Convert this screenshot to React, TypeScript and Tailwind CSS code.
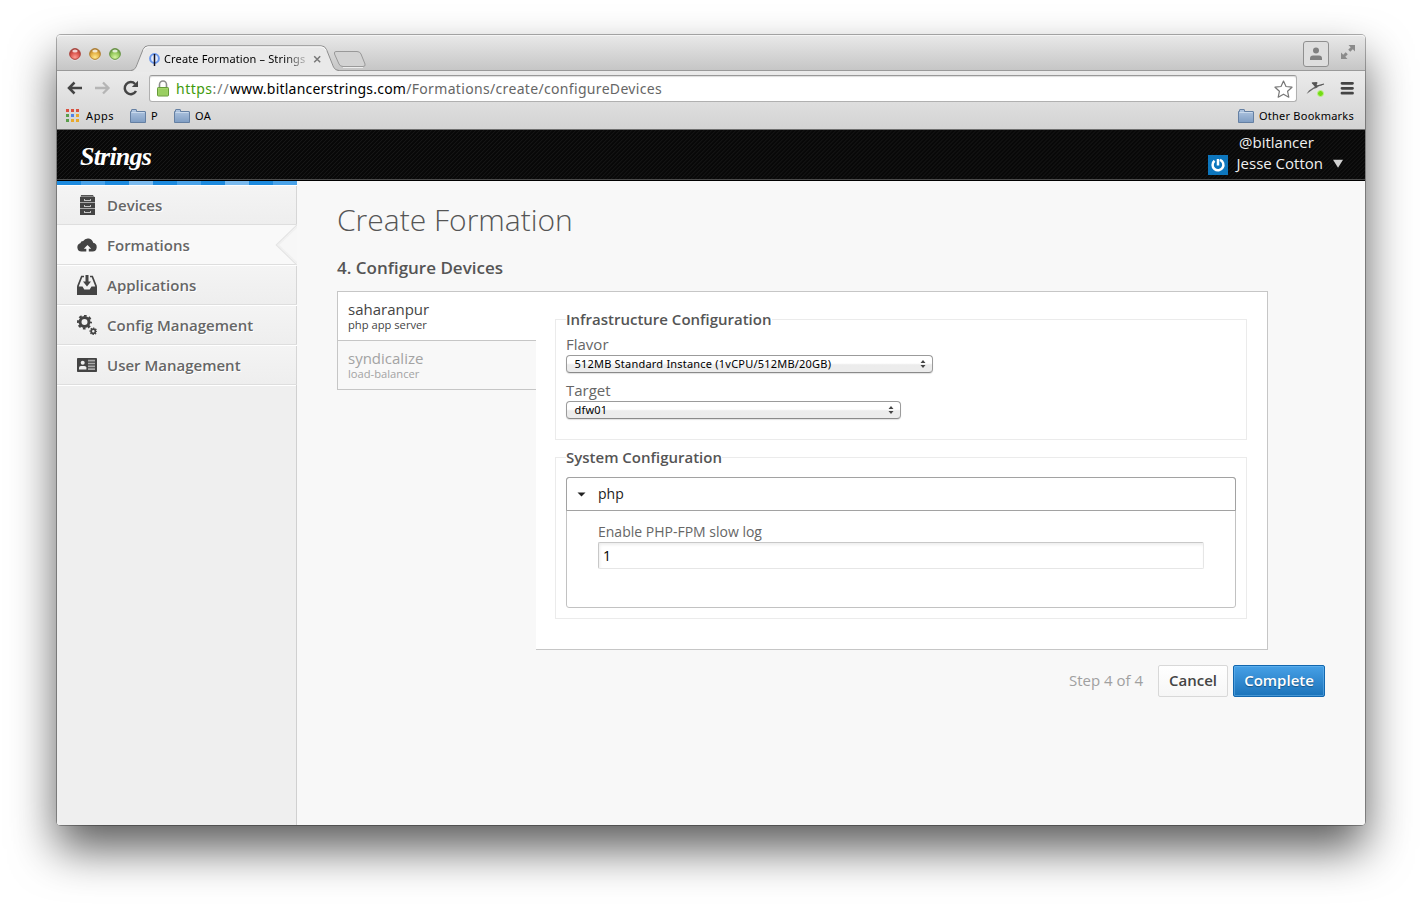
import type { ReactNode } from "react";

const stripe = [
  "bg-[#1c8ade]", "bg-[#49a2e8]", "bg-[#1c8ade]", "bg-[#7abaee]", "bg-[#1c8ade]",
  "bg-[#49a2e8]", "bg-[#1c8ade]", "bg-[#7abaee]", "bg-[#1c8ade]", "bg-[#49a2e8]",
];

function Folder() {
  return (
    <svg width="16" height="14" viewBox="0 0 16 14">
      <defs>
        <linearGradient id="folder" x1="0" y1="0" x2="0" y2="1">
          <stop offset="0" stopColor="#b3c8e2" />
          <stop offset="1" stopColor="#7f9dc3" />
        </linearGradient>
      </defs>
      <path d="M.5 13.5v-11h1v-1.5q0-.5.5-.5h4q.5 0 .5.5v1.5h8.500q.5 0 .5.5v10.500z" fill="url(#folder)" stroke="#6580a3" />
      <path d="M1.500 3.500h13" stroke="#c9d9ec" />
    </svg>
  );
}

function Light({ id, dark, mid, light }: { id: string; dark: string; mid: string; light: string }) {
  return (
    <svg width="12" height="13" viewBox="0 0 12 13">
      <defs>
        <radialGradient id={id} cx=".5" cy=".8" r=".75">
          <stop offset="0" stopColor={light} />
          <stop offset=".6" stopColor={mid} />
          <stop offset="1" stopColor={dark} />
        </radialGradient>
      </defs>
      <circle cx="6" cy="6.800" r="5.800" fill="#fff" opacity=".6" />
      <circle cx="6" cy="6" r="5.400" fill={`url(#${id})`} stroke={dark} strokeWidth=".9" />
      <ellipse cx="6" cy="3" rx="2.700" ry="1.500" fill="#fff" opacity=".75" />
    </svg>
  );
}

function DrawerIcon() {
  return (
    <svg width="20" height="20" viewBox="0 0 20 20">
      <path d="M4 0h12l1.500 2h-14z" fill="#888" />
      <path d="M4 0h12v1H4z" fill="#555" />
      <path d="M3 2h15v5H3zM3 8h15v5H3zM3 14h15v6H3z" fill="#444" />
      <path d="M3 7.500h15M3 13.500h15" stroke="#aaa" />
      <path d="M7 4h1v1h5V4h1v2H7zM7 10h1v1h5v-1h1v2H7zM7 16h1v1h5v-1h1v2H7z" fill="#c4c4c4" />
    </svg>
  );
}

function CloudIcon() {
  return (
    <svg width="20" height="20" viewBox="0 0 20 20">
      <path d="M4.500 16.500A4.200 4.200 0 0 1 3.300 8.300 3 3 0 0 1 6.200 6 5.500 5.500 0 0 1 16.200 7.800 4.400 4.400 0 0 1 15.500 16.500z" fill="#444" />
      <path d="M10.500 10l3.700 3.800h-2.400V17H9.300v-3.200H6.800z" fill="#f9f9f9" />
    </svg>
  );
}

function TrayIcon() {
  return (
    <svg width="20" height="20" viewBox="0 0 20 20">
      <path d="M7 1.500H4.700L1 11v1.500M13 1.500h2.300L19 11v1.500" fill="none" stroke="#444" strokeWidth="1.700" />
      <path d="M0 11.500h5.500l1.800 3h5.400l1.800-3H20V20H0z" fill="#444" />
      <path d="M8.500 0h3v6.500H14L10 11.500 6 6.500h2.500z" fill="#444" />
    </svg>
  );
}

function GearsIcon() {
  return (
    <svg width="20" height="20" viewBox="0 0 20 20" fill="none" stroke="#444">
      <circle cx="7.500" cy="7" r="4.500" strokeWidth="3" />
      <circle cx="7.500" cy="7" r="6.500" strokeWidth="2" strokeDasharray="2.700 2.405" strokeDashoffset="1.350" />
      <circle cx="16.300" cy="16.300" r="2.100" strokeWidth="1.700" />
      <circle cx="16.300" cy="16.300" r="3.200" strokeWidth="1.300" strokeDasharray="1.400 1.113" strokeDashoffset=".7" />
    </svg>
  );
}

function CardIcon() {
  return (
    <svg width="20" height="20" viewBox="0 0 20 20">
      <rect y="3" width="20" height="14" rx=".8" fill="#444" />
      <circle cx="5.700" cy="7.700" r="2" fill="#eee" />
      <path d="M2 14.500v-2q0-1.500 2-1.500h3.400q2 0 2 1.500v2z" fill="#eee" />
      <path d="M11 5.700h7M11 8.500h7M11 11.300h7M11 14.100h7" stroke="#aaa" strokeWidth="1.700" />
    </svg>
  );
}

function NavItem({ icon, label, active }: { icon: ReactNode; label: string; active?: boolean }) {
  return (
    <li
      className={
        active
          ? "relative flex h-10 items-center gap-2.5 border-b border-[#dedede] bg-[#f9f9f9] pt-px pl-5"
          : "flex h-10 items-center gap-2.5 border-t border-b border-t-white border-b-[#dedede] bg-linear-to-b from-[#f4f4f4] to-[#eeeeee] pl-5 shadow-[inset_-1px_0_0_#d6d6d6]"
      }
    >
      {icon}
      <span className="text-[15px] font-semibold text-[#666] [text-shadow:1px_1px_0_#fff]">{label}</span>
      {active && (
        <svg className="absolute -top-px right-0" width="24" height="42" viewBox="0 0 24 42">
          <path d="M24 .5L3 21 24 41.500z" fill="#f7f7f7" />
          <path d="M24 1L3.300 21 24 41" fill="none" stroke="#e4e4e4" strokeWidth="1.200" />
          <path d="M24 3L5.300 21 24 39" fill="none" stroke="#f0f0f0" strokeWidth="1.500" />
        </svg>
      )}
    </li>
  );
}

function Select({ value, wide }: { value: string; wide?: boolean }) {
  return (
    <button
      className={
        (wide ? "w-[367px]" : "w-[335px]") +
        " mt-px flex h-[18px] items-center justify-between rounded-[4px] border border-[#9b9b9b] border-b-[#8a8a8a] bg-linear-to-b from-white from-45% to-[#ececec] to-55% pr-1.5 pl-[7.5px] font-['Noto_Sans',sans-serif] text-[11px] leading-4 tracking-[0.21px] text-black shadow-[0_1px_1px_rgba(0,0,0,0.12)]"
      }
    >
      <span>{value}</span>
      <svg width="6" height="8" viewBox="0 0 6 8">
        <path d="M3 0l2.500 3h-5zM3 8l2.500-3h-5z" fill="#444" />
      </svg>
    </button>
  );
}

function TitleBar() {
  return (
    <div className="flex h-9 items-start rounded-t-[4px] border-b border-[#9a9a9a] bg-linear-to-b from-[#e9e9e9] to-[#c6c6c6] shadow-[inset_0_1px_0_#f5f5f5]">
      <div className="flex gap-2 pt-[13px] pl-3">
        <Light id="red" dark="#a43c35" mid="#d9534b" light="#ff9c92" />
        <Light id="amber" dark="#a9782a" mid="#e3ae42" light="#ffe88c" />
        <Light id="green" dark="#5f8c3c" mid="#93c75a" light="#d6f5a0" />
      </div>
      <div className="relative ml-2.5 h-9 w-[209px] pt-[10px]">
        <svg className="absolute top-[10px] left-0" width="209" height="27" viewBox="0 0 209 27">
          <path d="M0 27V26q3-.5 4.500-4L12 4.500Q13.500 1 17 1H190q4 0 5.500 3.500L203 22q1.500 3.500 5 4v1z" fill="#e9e9e9" />
          <path d="M0 25.500q3.500 0 5-3.500L12 4.500Q13.500.8 17 .8H190q4 0 5.500 3.700L202.500 22q1.500 3.500 5.500 3.500" fill="none" stroke="#8e8e8e" />
          <path d="M12.500 5.500Q14 2 17 1.900H190q3.500 0 5 3.600" fill="none" stroke="#f9f9f9" />
        </svg>
        <div className="relative flex h-7 items-center pl-[18px]">
          <svg className="shrink-0" width="12" height="14" viewBox="0 0 12 14">
            <circle cx="5.500" cy="6.500" r="4.400" fill="#e4ecfc" stroke="#6a98ee" strokeWidth="2" />
            <path d="M5.500 2v12" stroke="#112" strokeWidth="1.500" />
          </svg>
          <span className="w-[146px] shrink-0 overflow-hidden pl-[3px] font-['Noto_Sans',sans-serif] text-[11px] tracking-[0.14px] whitespace-nowrap text-black [mask-image:linear-gradient(to_right,#000_84%,rgba(0,0,0,0.25)_98%)]">
            Create Formation – Strings
          </span>
          <svg className="ml-1.5 shrink-0" width="9" height="9" viewBox="0 0 9 9">
            <path d="M1.200 1.200l6 6M7.200 1.200l-6 6" stroke="#777" strokeWidth="1.500" />
          </svg>
        </div>
      </div>
      <svg className="mt-[15px] -ml-[7px]" width="33" height="19" viewBox="0 0 33 19">
        <path d="M3 1.500H24q3 0 4 2.500l4 10q.8 2.500-2 2.500H10q-3 0-4-2.500L1.500 4Q.8 1.500 3 1.500z" fill="#d3d3d3" stroke="#999" />
        <path d="M10 17.500h20" stroke="#eee" />
      </svg>
      <div className="mt-1.5 ml-auto flex h-[26px] w-[26px] items-end justify-center rounded-[3px] border border-[#8f8f8f] bg-[#dedede] pb-1.5">
        <svg width="14" height="13" viewBox="0 0 14 13">
          <circle cx="7" cy="3.500" r="3" fill="#808080" />
          <path d="M1 13v-1.500q0-3 3-3h6q3 0 3 3V13z" fill="#808080" />
        </svg>
      </div>
      <svg className="mt-[9px] mr-[9px] ml-[11px]" width="16" height="16" viewBox="0 0 16 16">
        <path d="M8.500 1H15v6.500l-2.200-2.200-2.500 2.500-2.100-2.100 2.500-2.500zM1 8.500v6.500h6.500l-2.200-2.200 2.500-2.500-2.100-2.100-2.500 2.500z" fill="#8b8b8b" />
      </svg>
    </div>
  );
}

function Toolbar() {
  return (
    <div className="h-[59px] border-b border-[#6f6f6f] bg-linear-to-b from-[#ebebeb] to-[#d3d3d3] font-['Noto_Sans',sans-serif]">
      <div className="flex h-8 items-start pt-1">
        <div className="flex pt-[5px] pl-2.5">
          <svg width="16" height="16" viewBox="0 0 16 16" fill="none" stroke="#444" strokeWidth="2.500">
            <path d="M15 8H2M7.500 2.500L2 8l5.500 5.500" />
          </svg>
          <svg className="ml-3" width="16" height="16" viewBox="0 0 16 16" fill="none" stroke="#b5b5b5" strokeWidth="2.300">
            <path d="M0 8H13.500M8 2.500L13.500 8 8 13.500" />
          </svg>
          <svg className="ml-[11px]" width="18" height="16" viewBox="0 0 17 16">
            <path d="M13.500 11A6 6 0 1 1 12.600 4" fill="none" stroke="#444" strokeWidth="2.500" />
            <path d="M15.500.8V7H9.300z" fill="#444" />
          </svg>
        </div>
        <div className="ml-[9px] flex h-[27px] w-[1148px] items-center rounded-[3px] border border-[#b0b0b0] border-t-[#999] bg-white pr-[3px] pl-[7px] shadow-[inset_0_1px_1px_#ddd]">
          <svg width="12" height="17" viewBox="0 0 12 17">
            <path d="M2.500 8V4.500a3.500 3.500 0 0 1 7 0V8" fill="none" stroke="#8d8d8d" strokeWidth="1.600" />
            <rect x=".5" y="7.500" width="11" height="8.500" rx=".8" fill="#a5d66c" stroke="#669b3a" />
            <path d="M1.500 10h9M1.500 12h9M1.500 14h9" stroke="#8cc553" strokeWidth=".8" />
          </svg>
          <span className="ml-[7px] text-[14px] leading-6 whitespace-nowrap text-[#777]">
            <span className="tracking-[0.5px] text-[#3f9a0c]">https</span>
            <span className="tracking-[1px]">://</span>
            <span className="tracking-[0.22px] text-black">www.bitlancerstrings.com</span>
            <span className="tracking-[0.33px] text-[#666]">/Formations/create/configureDevices</span>
          </span>
          <svg className="ml-auto" width="19" height="18" viewBox="0 0 19 18">
            <path d="M9.500 1l2.500 5.500 6 .7-4.400 4.100 1.200 5.900-5.300-3-5.300 3 1.200-5.900L1 7.200l6-.7z" fill="#fff" stroke="#777" strokeWidth="1.200" strokeLinejoin="round" />
          </svg>
        </div>
        <svg className="mt-1 ml-2" width="22" height="20" viewBox="0 0 22 20">
          <path d="M1.500 15L4 11.500 10 7.500 13 8.500 8.500 10z" fill="#666" />
          <path d="M6.500 3.700l5.500-.7-1 4 8-1.500-8.500 3z" fill="#555" />
          <path d="M7 4h5.500M11.500 3.500L10.500 8M10 7.500l9-2.500" stroke="#555" strokeWidth="1.200" fill="none" />
          <circle cx="15.500" cy="14.500" r="3" fill="#74dc14" stroke="#c0f090" />
        </svg>
        <svg className="mt-[5px] ml-[13px]" width="14" height="16" viewBox="0 0 14 16">
          <path d="M2 3.300h10.500M2 8.300h10.500M2 13.200h10.500" stroke="#444" strokeWidth="2.800" strokeLinecap="round" />
        </svg>
      </div>
      <div className="flex h-[26px] items-center pr-[11px] pl-2 text-[11px] text-black">
        <svg width="16" height="16" viewBox="0 0 16 16">
          <path d="M1 1h3v3H1zM6 1h3v3H6zM11 1h3v3h-3z" fill="#d9503f" />
          <path d="M1 6h3v3H1zM1 11h3v3H1z" fill="#5a9e4b" />
          <path d="M6 6h3v3H6z" fill="#5082e8" />
          <path d="M11 6h3v3h-3zM6 11h3v3H6zM11 11h3v3h-3z" fill="#e8a92c" />
        </svg>
        <span className="ml-[5px] w-11 tracking-[0.6px]">Apps</span>
        <Folder />
        <span className="ml-[5px] w-[23px]">P</span>
        <Folder />
        <span className="ml-[5px] tracking-[0.3px]">OA</span>
        <span className="ml-auto flex items-center gap-[5px]">
          <Folder />
          <span className="tracking-[0.24px]">Other Bookmarks</span>
        </span>
      </div>
    </div>
  );
}

function SiteHeader() {
  return (
    <header className="flex h-[51px] items-start justify-between border-b border-black bg-[#0b0b0b] bg-[repeating-linear-gradient(135deg,#080808_0px,#080808_1.4px,#181818_2.1px,#080808_2.83px)] shadow-[inset_0_-1px_0_#4a4a4a]">
      <div className="pt-[9px] pl-[23px] font-['Liberation_Serif',serif] text-[26px] leading-9 font-bold tracking-[-0.8px] text-white italic">
        Strings
      </div>
      <div className="grid grid-cols-[20px_auto] gap-x-2 pt-[2px] pr-[22px] text-[15px] leading-[21px] text-[#f0f0f0]">
        <span className="col-start-2 pl-[3.500px]">@bitlancer</span>
        <svg className="mt-[2px]" width="20" height="20" viewBox="0 0 20 20">
          <path d="M0 0h20v20H0z" fill="#0d76bd" />
          <path d="M6.500 5.800A5.400 5.400 0 1 0 12 4.900M10 4v6.500" fill="none" stroke="#fff" strokeWidth="2.500" />
        </svg>
        <span className="flex items-center gap-2.5 pb-0.5 pl-px">
          Jesse Cotton
          <svg width="10" height="9" viewBox="0 0 10 9">
            <path d="M0 .8h10L5 8.800z" fill="#d0d0d0" />
          </svg>
        </span>
      </div>
    </header>
  );
}

function Sidebar() {
  return (
    <aside className="w-60 shrink-0 bg-[#efefef] shadow-[inset_-1px_0_0_#d0d0d0]">
      <div className="flex h-1">
        {stripe.map((c, i) => (
          <span key={i} className={`w-6 ${c}`} />
        ))}
      </div>
      <ul>
        <NavItem icon={<DrawerIcon />} label="Devices" />
        <NavItem icon={<CloudIcon />} label="Formations" active />
        <NavItem icon={<TrayIcon />} label="Applications" />
        <NavItem icon={<GearsIcon />} label="Config Management" />
        <NavItem icon={<CardIcon />} label="User Management" />
      </ul>
      <div className="mr-px h-px bg-white" />
    </aside>
  );
}

function Devices() {
  return (
    <div className="mt-[13px] flex w-[931px] items-start">
      <div className="w-[199px] border-t border-l border-[#c6c6c6]">
        <div className="border-b border-[#c6c6c6] bg-white pt-[7px] pb-[9px] pl-2.5 text-[#444]">
          <div className="text-[15px] leading-5">saharanpur</div>
          <div className="text-[11.2px] leading-3">php app server</div>
        </div>
        <div className="border-b border-[#c6c6c6] pt-[7px] pb-[9px] pl-2.5 text-[#a3a3a3]">
          <div className="text-[15px] leading-5">syndicalize</div>
          <div className="text-[11.2px] leading-3">load-balancer</div>
        </div>
      </div>
      <div className="h-[359px] w-[732px] border-t border-r border-b border-[#c6c6c6] bg-white pt-[17px] pr-5 pl-[19px] text-[15px] leading-5 text-[#666]">
        <fieldset className="h-[131px] border border-[#ebebeb] px-2.5">
          <legend className="font-semibold text-[#555]">Infrastructure Configuration</legend>
          <div className="pt-[5px]">Flavor</div>
          <Select wide value="512MB Standard Instance (1vCPU/512MB/20GB)" />
          <div className="pt-[7px]">Target</div>
          <Select value="dfw01" />
        </fieldset>
        <fieldset className="mt-[7px] h-[172px] border border-[#ebebeb] px-2.5">
          <legend className="font-semibold text-[#555]">System Configuration</legend>
          <div className="mt-2.5 h-[131px] rounded-[3px] border border-[#c2c2c2] text-[14px]">
            <div className="-mx-px -mt-px flex h-[34px] items-center rounded-t-[3px] border border-[#a2a2a2] pl-2.5 text-[#222]">
              <svg width="9" height="5" viewBox="0 0 9 5">
                <path d="M.5.5h8L4.500 4.500z" fill="#222" />
              </svg>
              <span className="ml-3">php</span>
            </div>
            <div className="px-[31px] pt-[11px]">
              <div>Enable PHP-FPM slow log</div>
              <div className="h-[27px] rounded-[2px] border border-[#e6e6e6] border-t-[#c8c8c8] border-l-[#c8c8c8] pl-1 leading-[26px] text-black shadow-[inset_1px_2px_3px_#eee]">
                1
              </div>
            </div>
          </div>
        </fieldset>
      </div>
    </div>
  );
}

export default function App() {
  return (
    <div className="h-[904px] w-[1422px] overflow-hidden bg-white pt-[35px] pl-[57px] font-['Open_Sans',sans-serif]">
      <div className="flex h-[790px] w-[1308px] flex-col rounded-[4px] shadow-[0_0_0_1px_rgba(0,0,0,0.3),0_24px_46px_rgba(0,0,0,0.64)]">
        <TitleBar />
        <Toolbar />
        <SiteHeader />
        <div className="flex flex-1 overflow-hidden rounded-b-[3px] bg-[#f8f8f8]">
          <Sidebar />
          <main className="flex-1 pt-[19px] pr-10 pl-10 text-[#555]">
            <h1 className="text-[30px] leading-10 font-light">Create Formation</h1>
            <h2 className="mt-[18px] text-[17px] leading-5 font-semibold">4. Configure Devices</h2>
            <Devices />
            <div className="mt-[15px] flex items-center justify-end text-[15px]">
              <span className="mr-[15px] pb-0.5 text-[#a0a0a0]">Step 4 of 4</span>
              <button className="mr-[5px] h-8 w-[70px] rounded-[2px] border border-[#d8d8d8] bg-linear-to-b from-white to-[#f6f6f6] pb-0.5 font-semibold text-[#444]">
                Cancel
              </button>
              <button className="h-8 w-[92px] rounded-[2px] border border-[#1267ae] bg-linear-to-b from-[#46a0e6] to-[#1a73ba] pb-0.5 font-semibold text-white shadow-[inset_0_0_0_1px_rgba(120,190,245,0.45)] [text-shadow:0_1px_1px_rgba(0,0,0,0.35)]">
                Complete
              </button>
            </div>
          </main>
        </div>
      </div>
    </div>
  );
}
